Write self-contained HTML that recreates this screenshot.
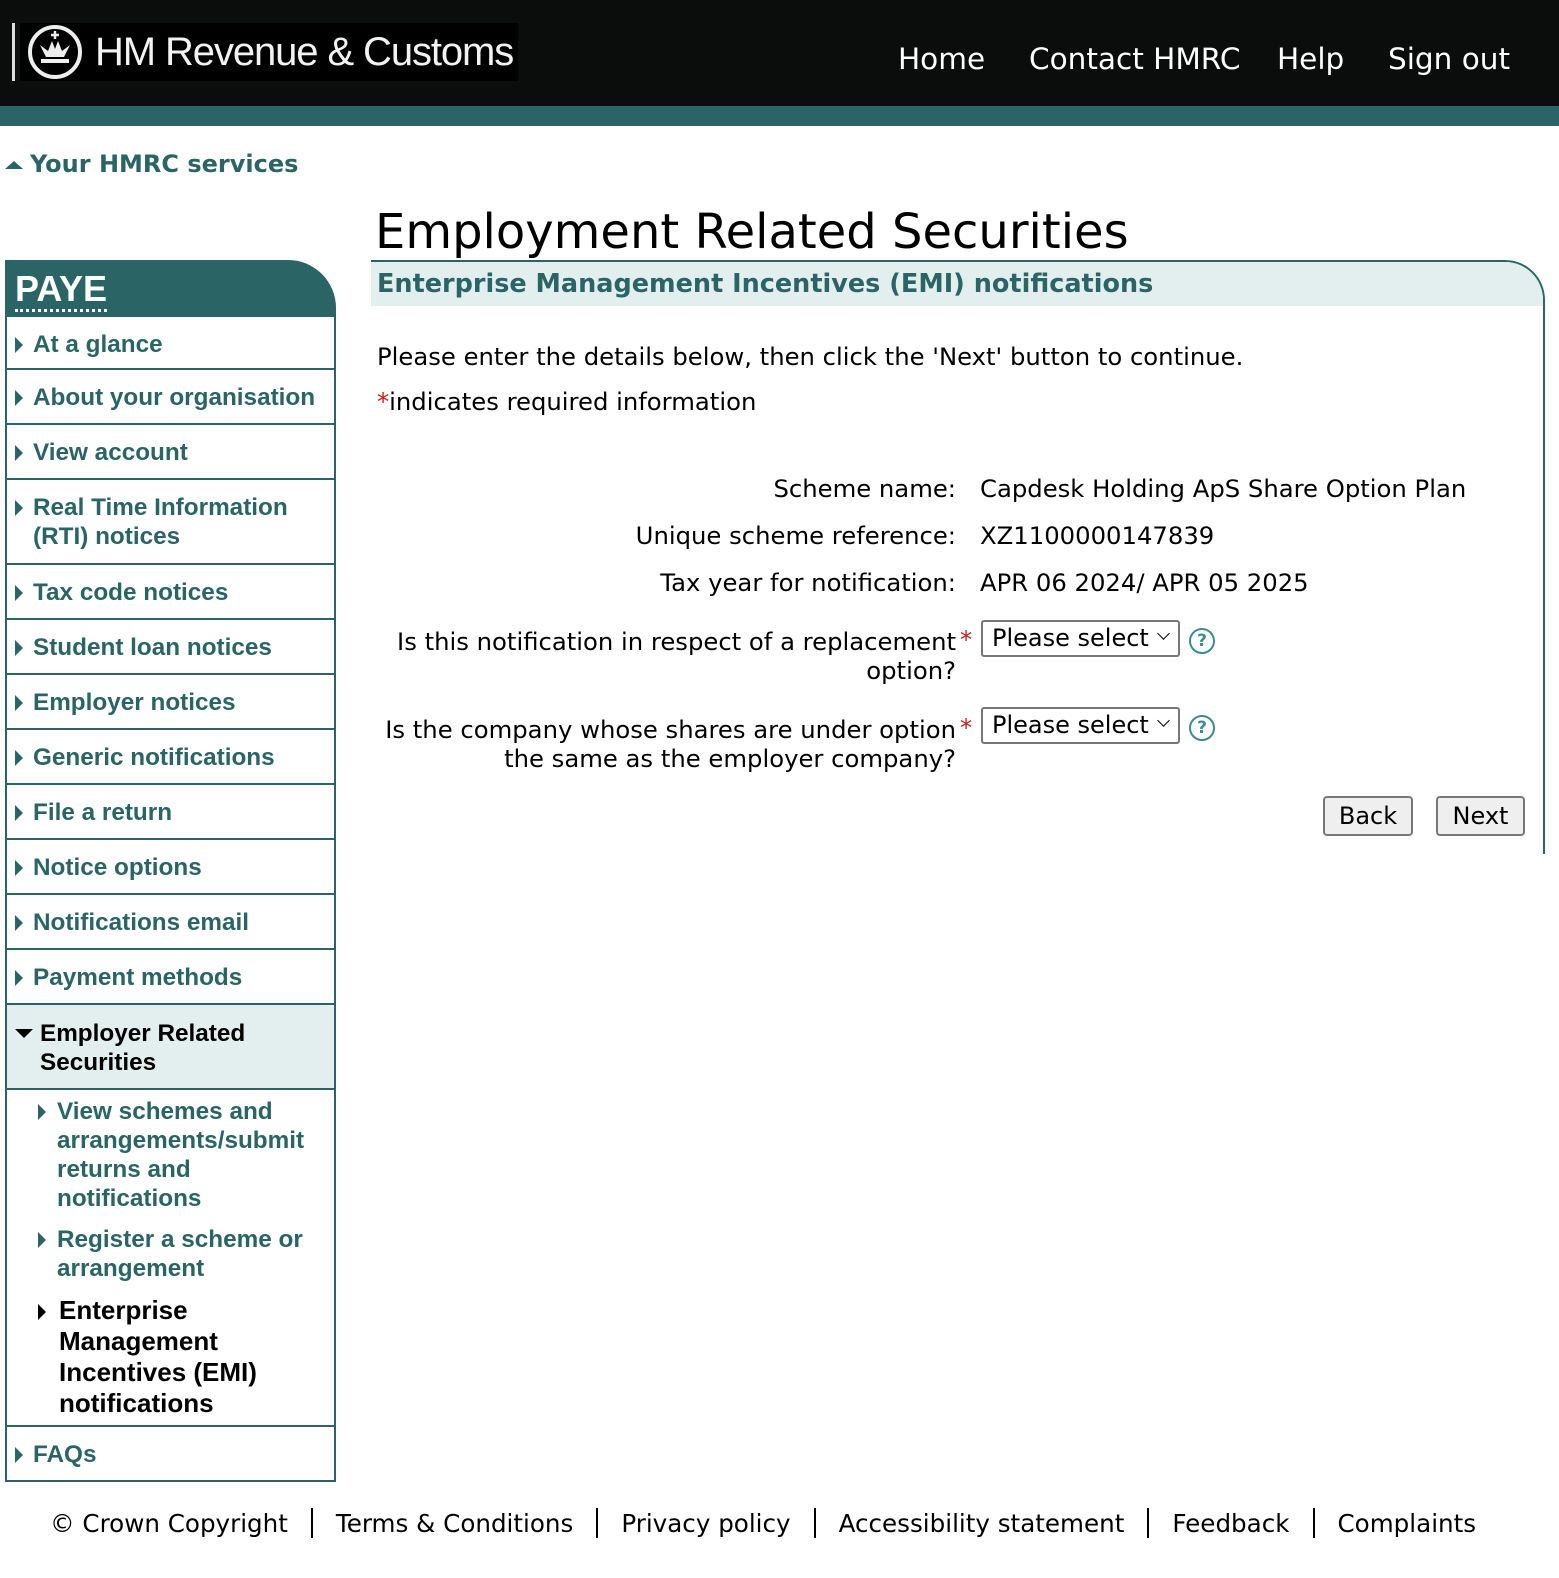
<!DOCTYPE html>
<html><head><meta charset="utf-8"><style>
*{margin:0;padding:0;box-sizing:border-box}
body{width:1559px;height:1578px;background:#fff;position:relative;font-family:"DejaVu Sans",Verdana,sans-serif;overflow:hidden}
.hdr{position:absolute;left:0;top:0;width:1559px;height:106px;background:#0b0c0c}
.bar{position:absolute;left:0;top:106px;width:1559px;height:20px;background:#2a6465}
.logo{position:absolute;left:20px;top:23px;width:498px;height:58px;background:#000}
.logo .vl{position:absolute;left:-8px;top:0;width:3px;height:58px;background:#ddd}
.logo .t{position:absolute;left:75px;top:4px;color:#f2f2f2;font-family:"Liberation Sans",Arial,sans-serif;font-size:40px;letter-spacing:-1.1px;line-height:50px;white-space:nowrap}
.nav{position:absolute;top:42px;color:#fff;font-size:29.5px;font-family:"DejaVu Sans",sans-serif}
.yhs{position:absolute;left:30px;top:150px;color:#2a6465;font-weight:bold;font-size:24px}
.side{position:absolute;left:5px;top:260px;width:331px;font-family:"Liberation Sans",Arial,sans-serif;font-weight:bold;font-size:24.3px}
.ph{height:57px;background:#2a6465;border-radius:0 48px 0 0;color:#fff;font-size:36px;padding:10px 0 0 10px;line-height:38px}
.ph span{border-bottom:3px dotted #fff}
.it{border:2px solid #2a6465;border-top:none;color:#2a6465;line-height:29px;padding:13px 6px 0 26px;position:relative}
.it.a:before{content:"";position:absolute;left:8px;top:20px;border-left:8px solid #2a6465;border-top:8px solid transparent;border-bottom:8px solid transparent}
.it.ers:before{content:"";position:absolute;left:8px;top:24px;border-left:9px solid transparent;border-right:9px solid transparent;border-top:9px solid #000}
.sub{position:relative;color:#2a6465;padding-left:50px;line-height:29px}
.sub:before{content:"";position:absolute;left:31px;top:7px;border-left:8px solid #2a6465;border-top:8px solid transparent;border-bottom:8px solid transparent}
.sub.k:before{border-left-color:#000;top:9px}
h1{position:absolute;left:375px;top:204px;font-weight:normal;font-size:48px;color:#000}
.panel{position:absolute;left:371px;top:260px;width:1174px;height:594px;border-top:2px solid #2a6465;border-right:2px solid #2a6465;border-radius:0 40px 0 0}
.ptitle{height:44px;background:#e3efee;border-radius:0 38px 0 0;color:#2a6465;font-weight:bold;font-size:25.5px;padding:7px 0 0 6px}
.tx{position:absolute;font-size:24.3px;color:#000;line-height:29px;white-space:nowrap}
.r{text-align:right;white-space:normal}
.star{color:#c0211c}
.sel{position:absolute;left:981px;width:199px;height:37px;border:2px solid #777;border-radius:3px;font-size:24px;padding:2px 0 0 9px;background:#fff;white-space:nowrap}
.sel i{position:absolute;right:10px;top:7px;width:9px;height:9px;border-right:1.5px solid #000;border-bottom:1.5px solid #000;transform:rotate(45deg)}
.q{position:absolute;left:1189px;width:26px;height:26px;border:2px solid #3d8b8a;border-radius:50%;color:#3d8b8a;font-size:17px;text-align:center;line-height:22px;font-weight:bold}
.btn{position:absolute;top:796px;height:40px;border:2px solid #777;border-radius:4px;background:#efefef;font-size:24px;text-align:center;line-height:36px}
.foot{position:absolute;top:1508px;left:50px;font-size:24.6px;color:#000;white-space:nowrap}
.foot b{font-weight:normal;display:inline-block;width:2px;height:30px;background:#000;vertical-align:-6px;margin:0 23px}
</style></head><body>
<div class="hdr">
<div class="logo"><div class="vl"></div>
<svg style="position:absolute;left:6px;top:2px" width="58" height="54" viewBox="0 0 58 54"><circle cx="29" cy="27" r="25" fill="none" stroke="#eee" stroke-width="4"/><path d="M15 34h28v4H15z M14 20l6 12h18l6-12-8 6-4-10-3 8-3-8-4 10z" fill="#eee"/><path d="M29 6v8M25 10h8" stroke="#eee" stroke-width="2.5"/></svg>
<div class="t">HM Revenue &amp; Customs</div></div>
<div class="nav" style="left:898px">Home</div>
<div class="nav" style="left:1029px">Contact HMRC</div>
<div class="nav" style="left:1277px">Help</div>
<div class="nav" style="left:1388px">Sign out</div>
</div>
<div class="bar"></div>
<div style="position:absolute;left:5px;top:161px;border-bottom:8px solid #2a6465;border-left:9px solid transparent;border-right:9px solid transparent"></div>
<div class="yhs">Your HMRC services</div>

<div class="side">
<div class="ph"><span>PAYE</span></div>
<div class="it a" style="height:53px">At a glance</div>
<div class="it a" style="height:55px">About your organisation</div>
<div class="it a" style="height:55px">View account</div>
<div class="it a" style="height:85px;padding-top:13px">Real Time Information (RTI) notices</div>
<div class="it a" style="height:55px">Tax code notices</div>
<div class="it a" style="height:55px">Student loan notices</div>
<div class="it a" style="height:55px">Employer notices</div>
<div class="it a" style="height:55px">Generic notifications</div>
<div class="it a" style="height:55px">File a return</div>
<div class="it a" style="height:55px">Notice options</div>
<div class="it a" style="height:55px">Notifications email</div>
<div class="it a" style="height:55px">Payment methods</div>
<div class="it ers" style="height:85px;background:#e3efee;color:#000;padding-left:33px;padding-top:14px">Employer Related Securities</div>
<div class="it" style="height:337px;padding:7px 6px 0 0">
<div class="sub" style="width:300px">View schemes and arrangements/submit returns and notifications</div>
<div class="sub" style="margin-top:12px;width:300px">Register a scheme or arrangement</div>
<div class="sub k" style="margin-top:12px;color:#000;font-size:26px;line-height:31px;padding-left:52px;width:280px">Enterprise Management Incentives (EMI) notifications</div>
</div>
<div class="it a" style="height:55px">FAQs</div>
</div>

<h1>Employment Related Securities</h1>
<div class="panel"><div class="ptitle">Enterprise Management Incentives (EMI) notifications</div></div>
<div class="tx" style="left:377px;top:342px">Please enter the details below, then click the 'Next' button to continue.</div>
<div class="tx" style="left:377px;top:387px"><span class="star">*</span>indicates required information</div>
<div class="tx" style="right:603px;top:474px">Scheme name:</div>
<div class="tx" style="left:980px;top:474px">Capdesk Holding ApS Share Option Plan</div>
<div class="tx" style="right:603px;top:521px">Unique scheme reference:</div>
<div class="tx" style="left:980px;top:521px">XZ1100000147839</div>
<div class="tx" style="right:603px;top:568px">Tax year for notification:</div>
<div class="tx" style="left:980px;top:568px">APR 06 2024/ APR 05 2025</div>
<div class="tx r" style="right:603px;top:627px;width:580px">Is this notification in respect of a replacement option?</div>
<div class="tx star" style="left:960px;top:625px">*</div>
<div class="sel" style="top:620px">Please select<i></i></div><div class="q" style="top:628px">?</div>
<div class="tx r" style="right:603px;top:715px;width:580px">Is the company whose shares are under option the same as the employer company?</div>
<div class="tx star" style="left:960px;top:713px">*</div>
<div class="sel" style="top:707px">Please select<i></i></div><div class="q" style="top:715px">?</div>
<div class="btn" style="left:1323px;width:90px">Back</div>
<div class="btn" style="left:1436px;width:89px">Next</div>

<div class="foot">© Crown Copyright<b></b>Terms &amp; Conditions<b></b>Privacy policy<b></b>Accessibility statement<b></b>Feedback<b></b>Complaints</div>
</body></html>
